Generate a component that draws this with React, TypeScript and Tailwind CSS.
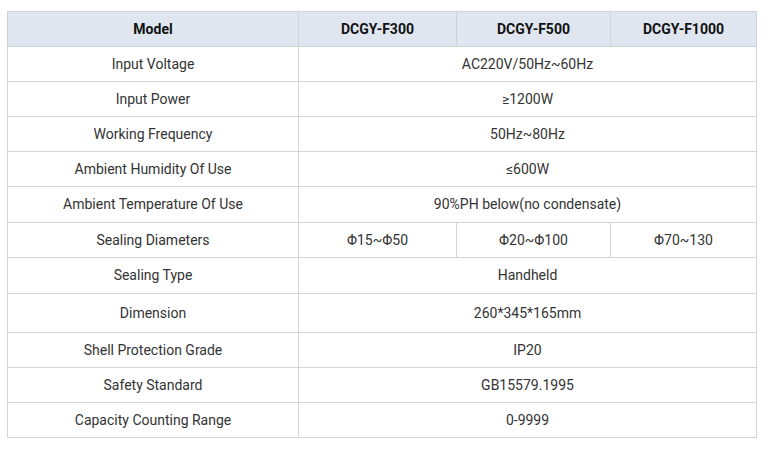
import React from "react";

const rows: { label: string; values: string[]; h: string }[] = [
  { label: "Input Voltage", values: ["AC220V/50Hz~60Hz"], h: "h-[35px]" },
  { label: "Input Power", values: ["≥1200W"], h: "h-[35px]" },
  { label: "Working Frequency", values: ["50Hz~80Hz"], h: "h-[35px]" },
  { label: "Ambient Humidity Of Use", values: ["≤600W"], h: "h-[35px]" },
  { label: "Ambient Temperature Of Use", values: ["90%PH below(no condensate)"], h: "h-[36px]" },
  { label: "Sealing Diameters", values: ["Φ15~Φ50", "Φ20~Φ100", "Φ70~130"], h: "h-[35px]" },
  { label: "Sealing Type", values: ["Handheld"], h: "h-[36px]" },
  { label: "Dimension", values: ["260*345*165mm"], h: "h-[39px]" },
  { label: "Shell Protection Grade", values: ["IP20"], h: "h-[35px]" },
  { label: "Safety Standard", values: ["GB15579.1995"], h: "h-[35px]" },
  { label: "Capacity Counting Range", values: ["0-9999"], h: "h-[35px]" },
];

const App = () => {
  return (
    <div className="w-[769px] h-[452px] bg-white pt-[11px] pl-[7px] font-['Roboto',sans-serif] text-[14px] text-[#333]">
      <table className="table-fixed border-collapse w-[749px] text-center">
        <colgroup>
          <col className="w-[291px]" />
          <col className="w-[158px]" />
          <col className="w-[154px]" />
          <col className="w-[146px]" />
        </colgroup>
        <thead>
          <tr className="h-[35px] bg-[#dfe6f0] font-bold text-[#111]">
            <th className="border border-[#cfd3d8]">Model</th>
            <th className="border border-[#cfd3d8]">DCGY-F300</th>
            <th className="border border-[#cfd3d8]">DCGY-F500</th>
            <th className="border border-[#cfd3d8]">DCGY-F1000</th>
          </tr>
        </thead>
        <tbody>
          {rows.map((row) => (
            <tr key={row.label} className={row.h}>
              <td className="border border-[#d4d4d4]">{row.label}</td>
              {row.values.length === 1 ? (
                <td colSpan={3} className="border border-[#d4d4d4]">
                  {row.values[0]}
                </td>
              ) : (
                row.values.map((v) => (
                  <td key={v} className="border border-[#d4d4d4]">
                    {v}
                  </td>
                ))
              )}
            </tr>
          ))}
        </tbody>
      </table>
    </div>
  );
};

export default App;
